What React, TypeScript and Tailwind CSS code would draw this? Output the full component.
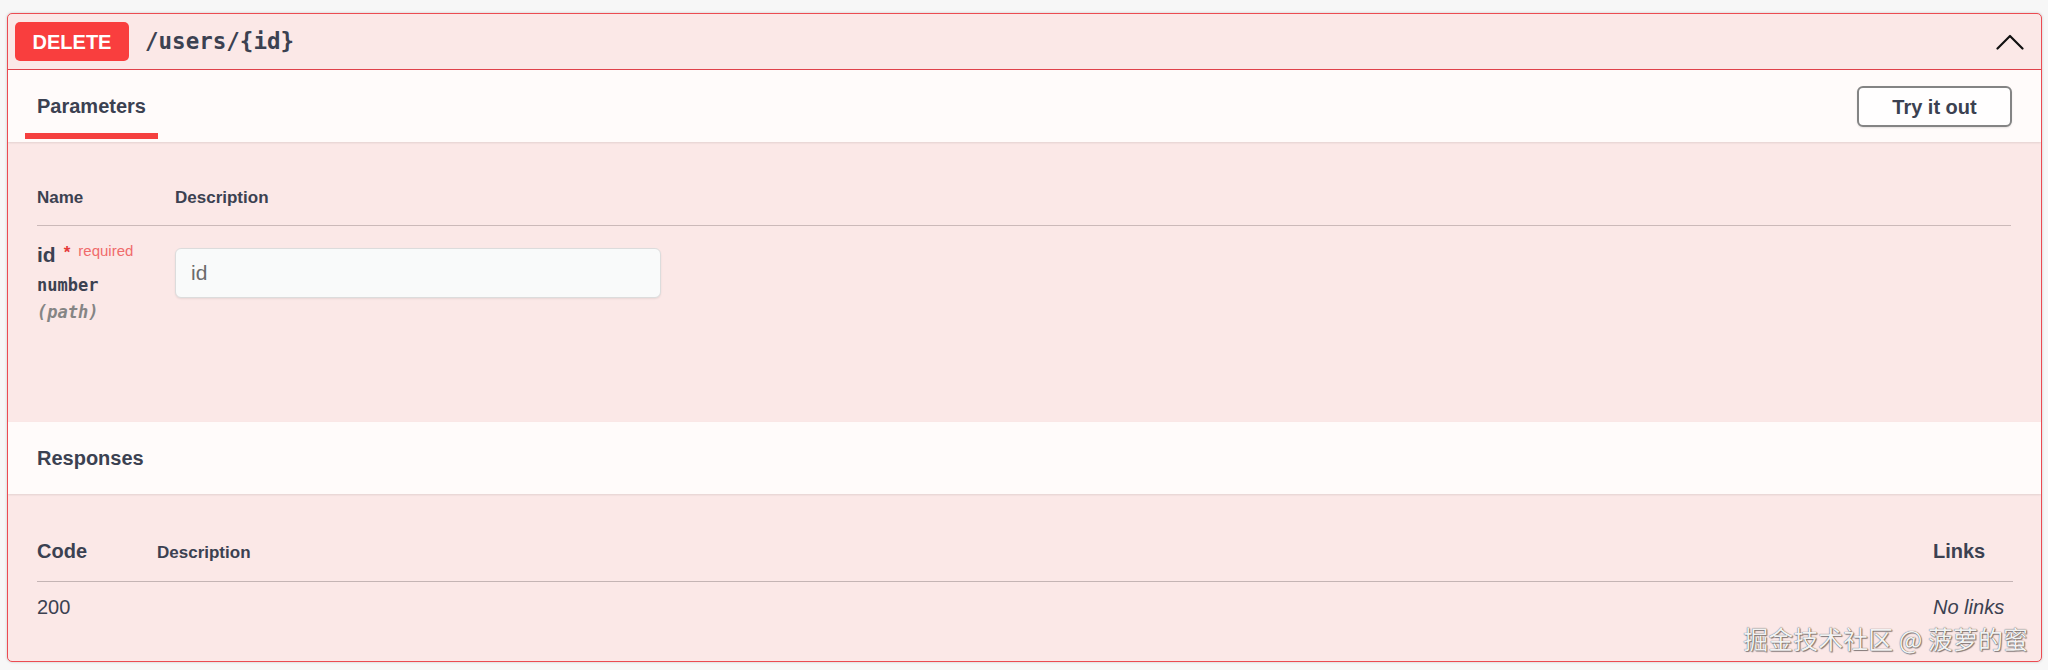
import React from 'react';

const sans = { fontFamily: '"Liberation Sans", Arial, sans-serif' };

function Chevron() {
  return (
    <svg width="28" height="16" viewBox="0 0 28 16" fill="none">
      <polyline points="1.5,14.5 14,2 26.5,14.5" stroke="#111" strokeWidth="2.2" strokeLinecap="round" strokeLinejoin="round" />
    </svg>
  );
}

function ParamsSection() {
  return (
    <>
      <div className="flex h-[72px] items-end bg-[#fffbfa] pl-[17px] pr-[29px] pb-[3px] shadow-[0_1px_2px_rgba(0,0,0,0.1)] relative z-10">
        <div className="flex flex-col">
          <div className="px-3 text-[20px] font-bold leading-6 text-[#3b4151]">Parameters</div>
          <div className="mt-[15px] h-[6px] bg-[#f5403f]" />
        </div>
        <button className="ml-auto mt-[4px] h-[41px] w-[155px] rounded-[6px] border-2 border-[#848484] bg-[#fffefe] text-[20px] font-bold text-[#3b4151] shadow-[0_1px_2px_rgba(0,0,0,0.1)] self-center">
          Try it out
        </button>
      </div>
      <div className="h-[280px] px-[29px] pr-[30px] pt-[44px]">
        <div className="flex border-b border-[#cbb9b9] pb-[15px] text-[17px] font-bold leading-6 text-[#3b4151]">
          <div className="w-[138px]">Name</div>
          <div>Description</div>
        </div>
        <div className="flex pt-[17px]">
          <div className="w-[138px]">
            <div className="flex items-start leading-6">
              <span className="text-[21px] font-bold text-[#3b4151]">id</span>
              <span className="ml-[8px] mt-[1px] text-[17px] font-bold leading-[18px] text-[#e53a3a]">*</span>
              <span className="ml-[8px] mt-[-1px] text-[15px] leading-[18px] text-[#f06b6b]">required</span>
            </div>
            <div className="mt-[6px] text-[17px] font-bold leading-6 text-[#3b4151]" style={{ fontFamily: '"DejaVu Sans Mono", monospace' }}>number</div>
            <div className="mt-[3px] text-[17px] italic font-bold leading-6 text-[#858585]" style={{ fontFamily: '"DejaVu Sans Mono", monospace' }}>(path)</div>
          </div>
          <div className="pt-[5px]">
            <div className="flex h-[50px] w-[486px] items-center rounded-[6px] border border-[#dcdcdc] bg-[#f9fafa] px-[15px] text-[21px] text-[#6b6b6b] shadow-[0_1px_2px_rgba(0,0,0,0.08)]">
              id
            </div>
          </div>
        </div>
      </div>
    </>
  );
}

function ResponsesSection() {
  return (
    <>
      <div className="flex h-[72px] items-center bg-[#fffbfa] pl-[29px] shadow-[0_1px_2px_rgba(0,0,0,0.1)] relative z-10">
        <div className="text-[20px] font-bold leading-6 text-[#3b4151]">Responses</div>
      </div>
      <div className="relative h-[167px] pl-[29px] pr-[28px] pt-[45px]">
        <div className="flex items-baseline border-b border-[#c4b4b4] pb-[16px] leading-6 text-[#3b4151]">
          <div className="w-[120px] text-[20px] font-bold">Code</div>
          <div className="flex-1 text-[17px] font-bold">Description</div>
          <div className="w-[80px] text-[20px] font-bold">Links</div>
        </div>
        <div className="flex pt-[13px] leading-6 text-[#3b4151]">
          <div className="w-[120px] text-[20px]">200</div>
          <div className="flex-1" />
          <div className="w-[80px] text-[20px] italic">No links</div>
        </div>
        <div
          className="absolute bottom-[9px] right-[13px] text-[25px] leading-7 text-[#f2f2f2] [text-shadow:0_0_1px_#333,1px_1px_1px_rgba(0,0,0,0.45)]"
          style={{ fontFamily: '"Noto Sans CJK SC", "Liberation Sans", sans-serif' }}
        >
          掘金技术社区 @ 菠萝的蜜
        </div>
      </div>
    </>
  );
}

export default function App() {
  return (
    <div className="h-[670px] w-[2048px] bg-[#f7f7f7] pl-[7px] pr-[6px] pt-[13px]" style={sans}>
      <div className="overflow-hidden rounded-[5px] border border-[#ec4b52] bg-[#fbe8e7] shadow-[0_0_3px_rgba(0,0,0,0.19)]">
        <div className="flex h-[56px] items-center border-b border-[#e0434c] pl-[7px] pr-[17px]">
          <div className="flex h-[39px] w-[114px] items-center justify-center rounded-[5px] bg-[#f93e3e] text-[20px] font-bold text-white">
            DELETE
          </div>
          <div className="ml-[16px] text-[22.5px] font-bold text-[#3b4151]" style={{ fontFamily: '"DejaVu Sans Mono", monospace' }}>
            /users/{'{'}id{'}'}
          </div>
          <div className="ml-auto flex items-center">
            <Chevron />
          </div>
        </div>
        <ParamsSection />
        <ResponsesSection />
      </div>
    </div>
  );
}
